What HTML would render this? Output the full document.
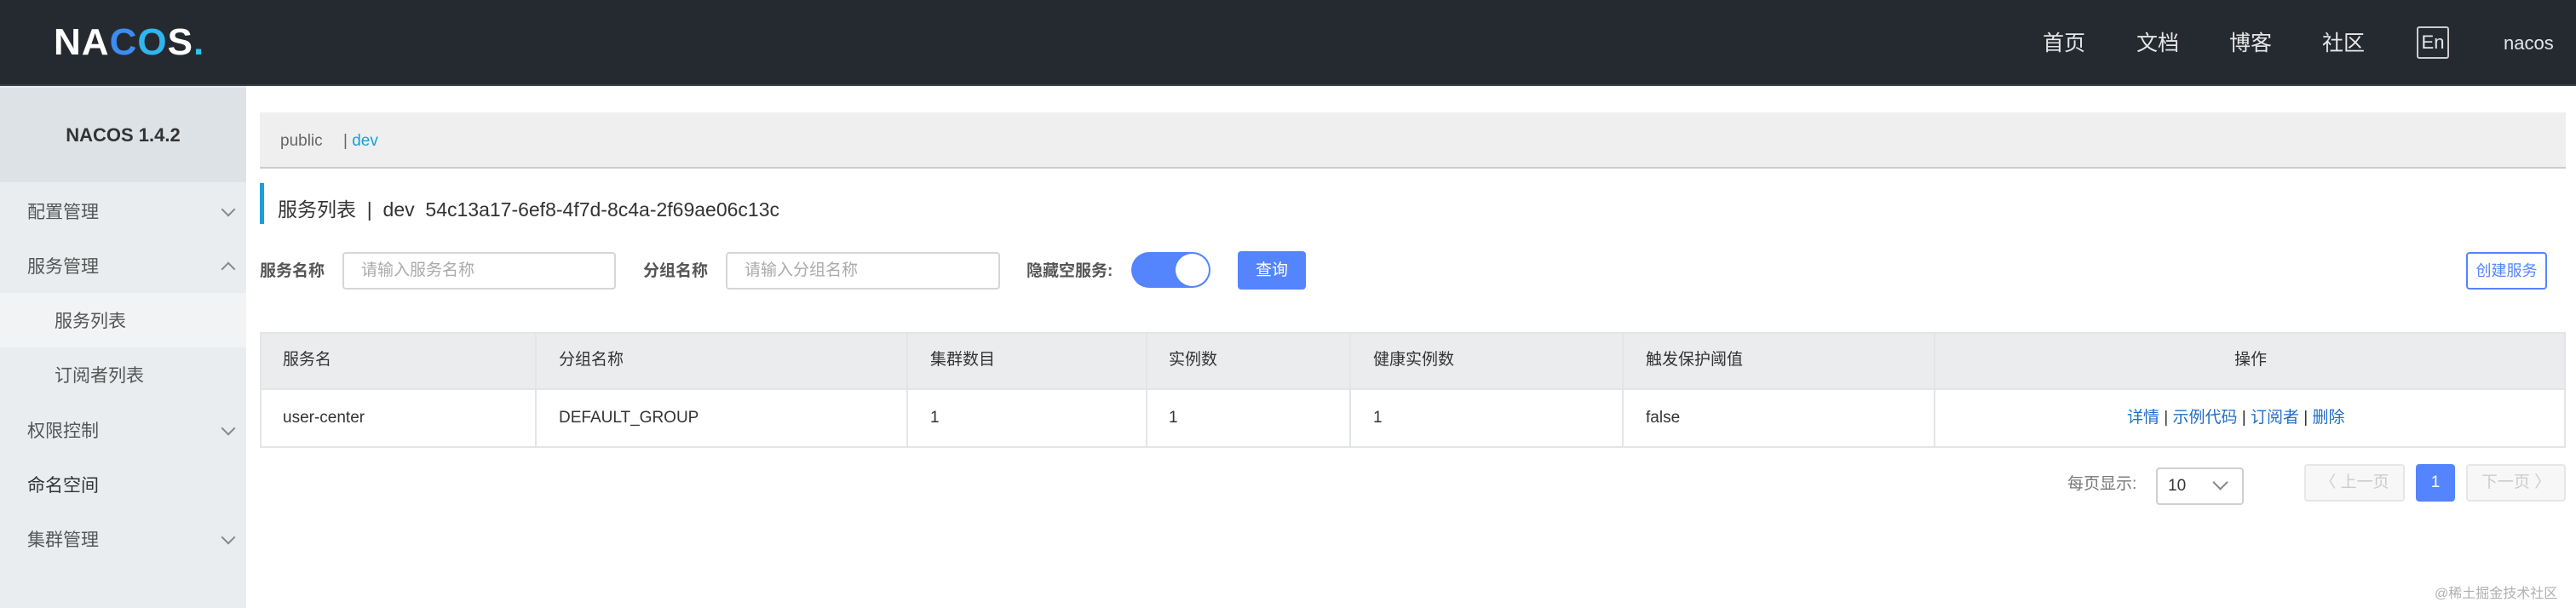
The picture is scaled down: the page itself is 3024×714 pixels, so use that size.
<!DOCTYPE html>
<html><head><meta charset="utf-8"><style>
*{box-sizing:border-box;margin:0;padding:0}
body{width:3024px;height:714px;overflow:hidden;background:#fff;font-family:"Liberation Sans","Noto Sans CJK SC",sans-serif;color:#333;position:relative;line-height:1.2}
.a{position:absolute;white-space:nowrap}
.hdr{left:0;top:0;width:3024px;height:101px;background:#252a31;border-bottom:2px solid #3a4048}
.nav{color:#e6e6e6;font-size:25px;top:36px}
.side{left:0;top:101px;width:289px;height:613px;background:#eaedf0}
.mi{font-size:21px;color:#555;left:32px}
.chev{left:262px;width:12px;height:12px;border-right:2px solid #888;border-bottom:2px solid #888;transform:rotate(45deg)}
.inp{height:44px;border:2px solid #d6d6d6;border-radius:4px;font-size:19px;color:#aaa;padding:0 20px;line-height:40px}
.lbl{font-size:19px;font-weight:bold;color:#555;top:308px}
.th{font-size:19px;color:#333;top:412px}
.td{font-size:19px;color:#333;top:480px}
.vl{top:391px;width:2px;height:134px;background:#e3e5e8}
.pg{height:44px;border:2px solid #e6e6e6;border-radius:4px;font-size:19px;color:#ccc;text-align:center;line-height:40px;top:545px}
</style></head><body>
<div class="a hdr"></div>
<div class="a" style="left:63px;top:24px;font-size:44px;font-weight:bold;color:#fff;letter-spacing:1px">NA<span style="color:#3d8cf0">C</span><span style="color:#2fb6ee">O</span>S<span style="color:#2dc6e8">.</span></div>
<div class="a nav" style="left:2398px">首页</div>
<div class="a nav" style="left:2508px">文档</div>
<div class="a nav" style="left:2617px">博客</div>
<div class="a nav" style="left:2726px">社区</div>
<div class="a" style="left:2837px;top:31px;width:38px;height:38px;border:2px solid #ccc;border-radius:3px;color:#e6e6e6;font-size:22px;text-align:center;line-height:33px">En</div>
<div class="a nav" style="left:2939px;font-size:22px;top:38px">nacos</div>

<div class="a side"></div>
<div class="a" style="left:0;top:103px;width:289px;height:111px;background:#dde2e6"></div>
<div class="a" style="left:0;top:146px;width:289px;text-align:center;font-size:22px;font-weight:bold;color:#333">NACOS 1.4.2</div>
<div class="a mi" style="top:237px">配置管理</div><div class="a chev" style="top:240px"></div>
<div class="a mi" style="top:301px">服务管理</div><div class="a chev" style="top:310px;transform:rotate(225deg)"></div>
<div class="a" style="left:0;top:344px;width:289px;height:64px;background:#f1f3f5"></div>
<div class="a mi" style="top:365px;left:64px">服务列表</div>
<div class="a mi" style="top:429px;left:64px">订阅者列表</div>
<div class="a mi" style="top:494px">权限控制</div><div class="a chev" style="top:497px"></div>
<div class="a mi" style="top:558px;color:#333">命名空间</div>
<div class="a mi" style="top:622px">集群管理</div><div class="a chev" style="top:625px"></div>

<div class="a" style="left:305px;top:132px;width:2707px;height:66px;background:#efefef;border-bottom:2px solid #ccc"></div>
<div class="a" style="left:329px;top:155px;font-size:19px;color:#666">public</div>
<div class="a" style="left:403px;top:155px;font-size:19px;color:#666">| <span style="color:#17a1d6">dev</span></div>

<div class="a" style="left:305px;top:215px;width:5px;height:48px;background:#1a9ed6"></div>
<div class="a" style="left:326px;top:233px;font-size:23px;color:#333">服务列表 &nbsp;|&nbsp; dev &nbsp;54c13a17-6ef8-4f7d-8c4a-2f69ae06c13c</div>

<div class="a lbl" style="left:305px">服务名称</div>
<div class="a inp" style="left:402px;top:296px;width:321px">请输入服务名称</div>
<div class="a lbl" style="left:755px">分组名称</div>
<div class="a inp" style="left:852px;top:296px;width:322px">请输入分组名称</div>
<div class="a lbl" style="left:1205px">隐藏空服务:</div>
<div class="a" style="left:1328px;top:296px;width:93px;height:42px;border-radius:21px;background:#5584ff"></div>
<div class="a" style="left:1380px;top:298px;width:39px;height:38px;border-radius:50%;background:#fff"></div>
<div class="a" style="left:1453px;top:295px;width:80px;height:45px;border-radius:4px;background:#5584ff;color:#fff;font-size:19px;text-align:center;line-height:45px">查询</div>
<div class="a" style="left:2895px;top:296px;width:95px;height:44px;border:2px solid #5584ff;border-radius:4px;color:#5584ff;font-size:18px;text-align:center;line-height:40px">创建服务</div>

<div class="a" style="left:305px;top:390px;width:2707px;height:136px;border:2px solid #e3e5e8"></div>
<div class="a" style="left:307px;top:392px;width:2703px;height:66px;background:#ebeced;border-bottom:2px solid #e3e5e8"></div>
<div class="a vl" style="left:628px"></div>
<div class="a vl" style="left:1064px"></div>
<div class="a vl" style="left:1345px"></div>
<div class="a vl" style="left:1584px"></div>
<div class="a vl" style="left:1904px"></div>
<div class="a vl" style="left:2270px"></div>
<div class="a th" style="left:332px">服务名</div>
<div class="a th" style="left:656px">分组名称</div>
<div class="a th" style="left:1092px">集群数目</div>
<div class="a th" style="left:1372px">实例数</div>
<div class="a th" style="left:1612px">健康实例数</div>
<div class="a th" style="left:1932px">触发保护阈值</div>
<div class="a th" style="left:2623px">操作</div>
<div class="a td" style="left:332px">user-center</div>
<div class="a td" style="left:656px">DEFAULT_GROUP</div>
<div class="a td" style="left:1092px">1</div>
<div class="a td" style="left:1372px">1</div>
<div class="a td" style="left:1612px">1</div>
<div class="a td" style="left:1932px">false</div>
<div class="a td" style="left:2497px;color:#1f6ec8">详情 <span style="color:#333">|</span> 示例代码 <span style="color:#333">|</span> 订阅者 <span style="color:#333">|</span> 删除</div>

<div class="a" style="left:2427px;top:558px;font-size:19px;color:#777">每页显示:</div>
<div class="a" style="left:2531px;top:549px;width:103px;height:44px;border:2px solid #d0d0d0;border-radius:4px;font-size:19px;color:#333;padding:0 12px;line-height:40px">10</div>
<div class="a" style="left:2600px;top:560px;width:13px;height:13px;border-right:2px solid #888;border-bottom:2px solid #888;transform:rotate(45deg)"></div>
<div class="a pg" style="left:2705px;width:118px;background:#f7f7f7">〈 上一页</div>
<div class="a pg" style="left:2836px;width:46px;background:#5584ff;border-color:#5584ff;color:#fff">1</div>
<div class="a pg" style="left:2895px;width:117px;background:#f7f7f7">下一页 〉</div>
<div class="a" style="left:2858px;top:688px;font-size:16px;color:#b0b0b0">@稀土掘金技术社区</div>
</body></html>
